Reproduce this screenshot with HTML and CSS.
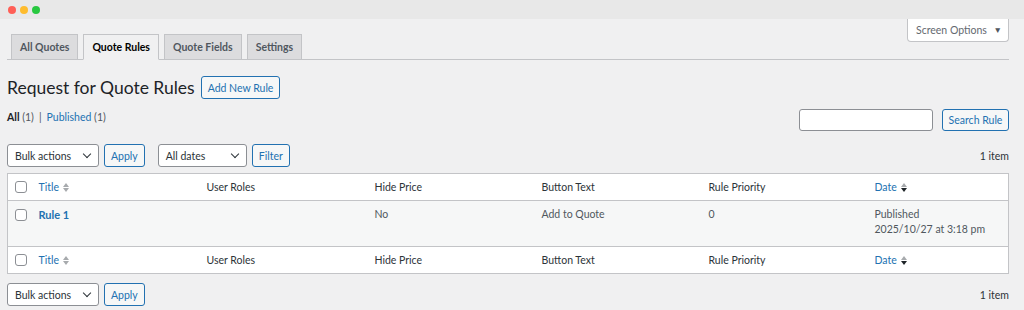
FILE: index.html
```html
<!DOCTYPE html>
<html lang="en">
<head>
  <meta charset="UTF-8" />
  <title>Request for Quote Rules</title>
  <link rel="stylesheet" href="styles.css">
</head>
<body>
  <div class="window-bar">
    <span class="dot red"></span>
    <span class="dot yellow"></span>
    <span class="dot green"></span>
  </div>

  <div class="wrap">
    <div class="screen-meta">
      <button class="screen-options">Screen Options <span class="caret">&#9660;</span></button>
    </div>

    <nav class="nav-tabs">
      <div class="tab-list">
        <a class="nav-tab">All Quotes</a>
        <a class="nav-tab active">Quote Rules</a>
        <a class="nav-tab">Quote Fields</a>
        <a class="nav-tab">Settings</a>
      </div>
    </nav>

    <div class="page-title">
      <h1>Request for Quote Rules</h1>
      <button class="button">Add New Rule</button>
    </div>

    <div class="list-top">
      <ul class="subsubsub">
        <li><strong>All</strong> <span class="count">(1)</span></li>
        <li class="sep">|</li>
        <li><a>Published</a> <span class="count">(1)</span></li>
      </ul>
      <div class="search-box">
        <input type="search" class="search-input">
        <button class="button">Search Rule</button>
      </div>
    </div>

    <div class="tablenav">
      <div class="actions">
        <div class="select bulk">Bulk actions <span class="chevron"></span></div>
        <button class="button">Apply</button>
      </div>
      <div class="actions">
        <div class="select dates">All dates <span class="chevron"></span></div>
        <button class="button">Filter</button>
      </div>
      <div class="num-items">1 item</div>
    </div>

    <table class="list-table">
      <colgroup>
        <col class="c-check">
        <col class="c-wide"><col class="c-wide"><col class="c-narrow"><col class="c-narrow"><col class="c-last">
        <col>
      </colgroup>
      <thead>
        <tr>
          <td class="check"><span class="checkbox"></span></td>
          <th><a class="sort">Title <span class="sort-icon"></span></a></th>
          <th>User Roles</th>
          <th>Hide Price</th>
          <th>Button Text</th>
          <th>Rule Priority</th>
          <th><a class="sort">Date <span class="sort-icon desc"></span></a></th>
        </tr>
      </thead>
      <tbody>
        <tr>
          <td class="check"><span class="checkbox"></span></td>
          <td><a class="row-title">Rule 1</a></td>
          <td></td>
          <td>No</td>
          <td>Add to Quote</td>
          <td>0</td>
          <td>Published<br>2025/10/27 at 3:18 pm</td>
        </tr>
      </tbody>
      <tfoot>
        <tr>
          <td class="check"><span class="checkbox"></span></td>
          <th><a class="sort">Title <span class="sort-icon"></span></a></th>
          <th>User Roles</th>
          <th>Hide Price</th>
          <th>Button Text</th>
          <th>Rule Priority</th>
          <th><a class="sort">Date <span class="sort-icon desc"></span></a></th>
        </tr>
      </tfoot>
    </table>

    <div class="tablenav bottom">
      <div class="actions">
        <div class="select bulk">Bulk actions <span class="chevron"></span></div>
        <button class="button">Apply</button>
      </div>
      <div class="num-items">1 item</div>
    </div>
  </div>
</body>
</html>
```

FILE: styles.css
```css
:root {
  --bg: #f0f0f1;
  --text: #1d2327;
  --text-mid: #2c3338;
  --text-light: #50575e;
  --link: #2271b1;
  --border: #c3c4c7;
  --input-border: #8c8f94;
}

* {
  box-sizing: border-box;
}

body {
  margin: 0;
  background: var(--bg);
  color: var(--text);
  font-family: 'Lato', 'Open Sans', sans-serif;
  font-size: 10.5px;
}

button {
  font-family: inherit;
}

.window-bar {
  height: 19px;
  background: #e8e8e8;
  display: flex;
  align-items: center;
  gap: 4px;
  padding-left: 8px;
}

.dot {
  width: 8px;
  height: 8px;
  border-radius: 50%;
}

.dot.red { background: #ff5f57; }
.dot.yellow { background: #febc2e; }
.dot.green { background: #28c840; }

.wrap {
  padding: 0 15px 0 7px;
}

.screen-meta {
  float: right;
}

.screen-options {
  display: block;
  width: 102px;
  height: 23px;
  background: #fff;
  border: 1px solid var(--border);
  border-top: 0;
  border-radius: 0 0 4px 4px;
  color: #646970;
  font-size: 10.5px;
  padding: 0 0 0 2px;
}

.screen-options .caret {
  font-size: 8.5px;
  margin-left: 4px;
  color: #50575e;
  vertical-align: 1px;
}

.nav-tabs {
  display: block;
  height: 41px;
  padding: 15px 0 0 4px;
  border-bottom: 1px solid var(--border);
}

.tab-list {
  display: flex;
  gap: 5px;
}

.nav-tab {
  height: 26px;
  display: flex;
  align-items: center;
  padding: 0 8px;
  background: #dcdcde;
  border: 1px solid var(--border);
  color: var(--text-light);
  font-weight: 700;
  font-size: 10.5px;
}

.nav-tab.active {
  background: var(--bg);
  border-bottom-color: var(--bg);
  color: #000;
}

.page-title {
  display: flex;
  align-items: center;
  gap: 6px;
  margin-top: 16px;
}

h1 {
  margin: 0;
  font-size: 17.5px;
  font-weight: 400;
  color: var(--text);
  line-height: 23px;
}

.button {
  height: 23px;
  padding: 0 6px;
  background: #f6f7f7;
  border: 1px solid var(--link);
  border-radius: 3px;
  color: var(--link);
  font-size: 10.5px;
}

.list-top {
  display: flex;
  justify-content: space-between;
  align-items: flex-start;
  margin-top: 10px;
}

.subsubsub {
  list-style: none;
  margin: 0;
  padding: 0;
  display: flex;
  gap: 5px;
  line-height: 16px;
  color: var(--text-light);
}

.subsubsub strong {
  color: var(--text);
}

.subsubsub a {
  color: var(--link);
}

.search-box {
  display: flex;
  gap: 9px;
}

.search-input {
  width: 134px;
  height: 22px;
  border: 1px solid var(--input-border);
  border-radius: 3px;
  background: #fff;
  margin: 0;
}

.search-box .button {
  height: 22px;
  width: 67px;
  padding: 0;
}

.tablenav {
  display: flex;
  align-items: center;
  gap: 13px;
  margin-top: 13px;
  height: 23px;
}

.tablenav.bottom {
  margin-top: 9px;
}

.actions {
  display: flex;
  gap: 5px;
}

.select {
  height: 23px;
  border: 1px solid var(--input-border);
  border-radius: 3px;
  background: #fff;
  display: flex;
  align-items: center;
  justify-content: space-between;
  padding: 0 8px 0 7px;
  color: var(--text-mid);
}

.select.bulk { width: 92px; }
.select.dates { width: 89px; }

.chevron {
  width: 6px;
  height: 6px;
  border-right: 1.3px solid var(--text-mid);
  border-bottom: 1.3px solid var(--text-mid);
  transform: translateY(-2px) rotate(45deg);
}

.num-items {
  margin-left: auto;
  color: var(--text-mid);
}

.list-table {
  width: 100%;
  margin-top: 6px;
  border: 1px solid var(--border);
  border-collapse: collapse;
  table-layout: fixed;
  background: #fff;
}

.c-check { width: 23px; }
.c-wide { width: 168px; }
.c-narrow { width: 167px; }
.c-last { width: 166px; }

.list-table th,
.list-table td {
  text-align: left;
  font-weight: 400;
  padding: 0 8px;
  vertical-align: middle;
}

.list-table thead th,
.list-table thead td,
.list-table tfoot th,
.list-table tfoot td {
  height: 27px;
  color: var(--text-mid);
}

.list-table thead tr {
  border-bottom: 1px solid var(--border);
}

.list-table tfoot tr {
  border-top: 1px solid var(--border);
}

.list-table tbody tr {
  background: #f6f7f7;
}

.list-table tbody td {
  height: 46px;
  vertical-align: top;
  padding-top: 6px;
  color: var(--text-light);
  line-height: 15px;
}

.list-table td.check {
  padding: 0 0 0 7px;
}

.list-table tbody td.check {
  padding-top: 8px;
}

.checkbox {
  display: block;
  width: 12px;
  height: 12px;
  border: 1px solid var(--input-border);
  border-radius: 3px;
  background: #fff;
}

.sort {
  color: var(--link);
  display: inline-flex;
  align-items: center;
  gap: 4px;
}

.sort-icon {
  display: inline-flex;
  flex-direction: column;
  gap: 1px;
}

.sort-icon::before,
.sort-icon::after {
  content: "";
  width: 0;
  height: 0;
  border-left: 3.5px solid transparent;
  border-right: 3.5px solid transparent;
}

.sort-icon::before {
  border-bottom: 4px solid #a7aaad;
}

.sort-icon::after {
  border-top: 4px solid #a7aaad;
}

.sort-icon.desc::after {
  border-top-color: var(--text);
}

.row-title {
  color: var(--link);
  font-weight: 700;
  font-size: 11px;
}
```
